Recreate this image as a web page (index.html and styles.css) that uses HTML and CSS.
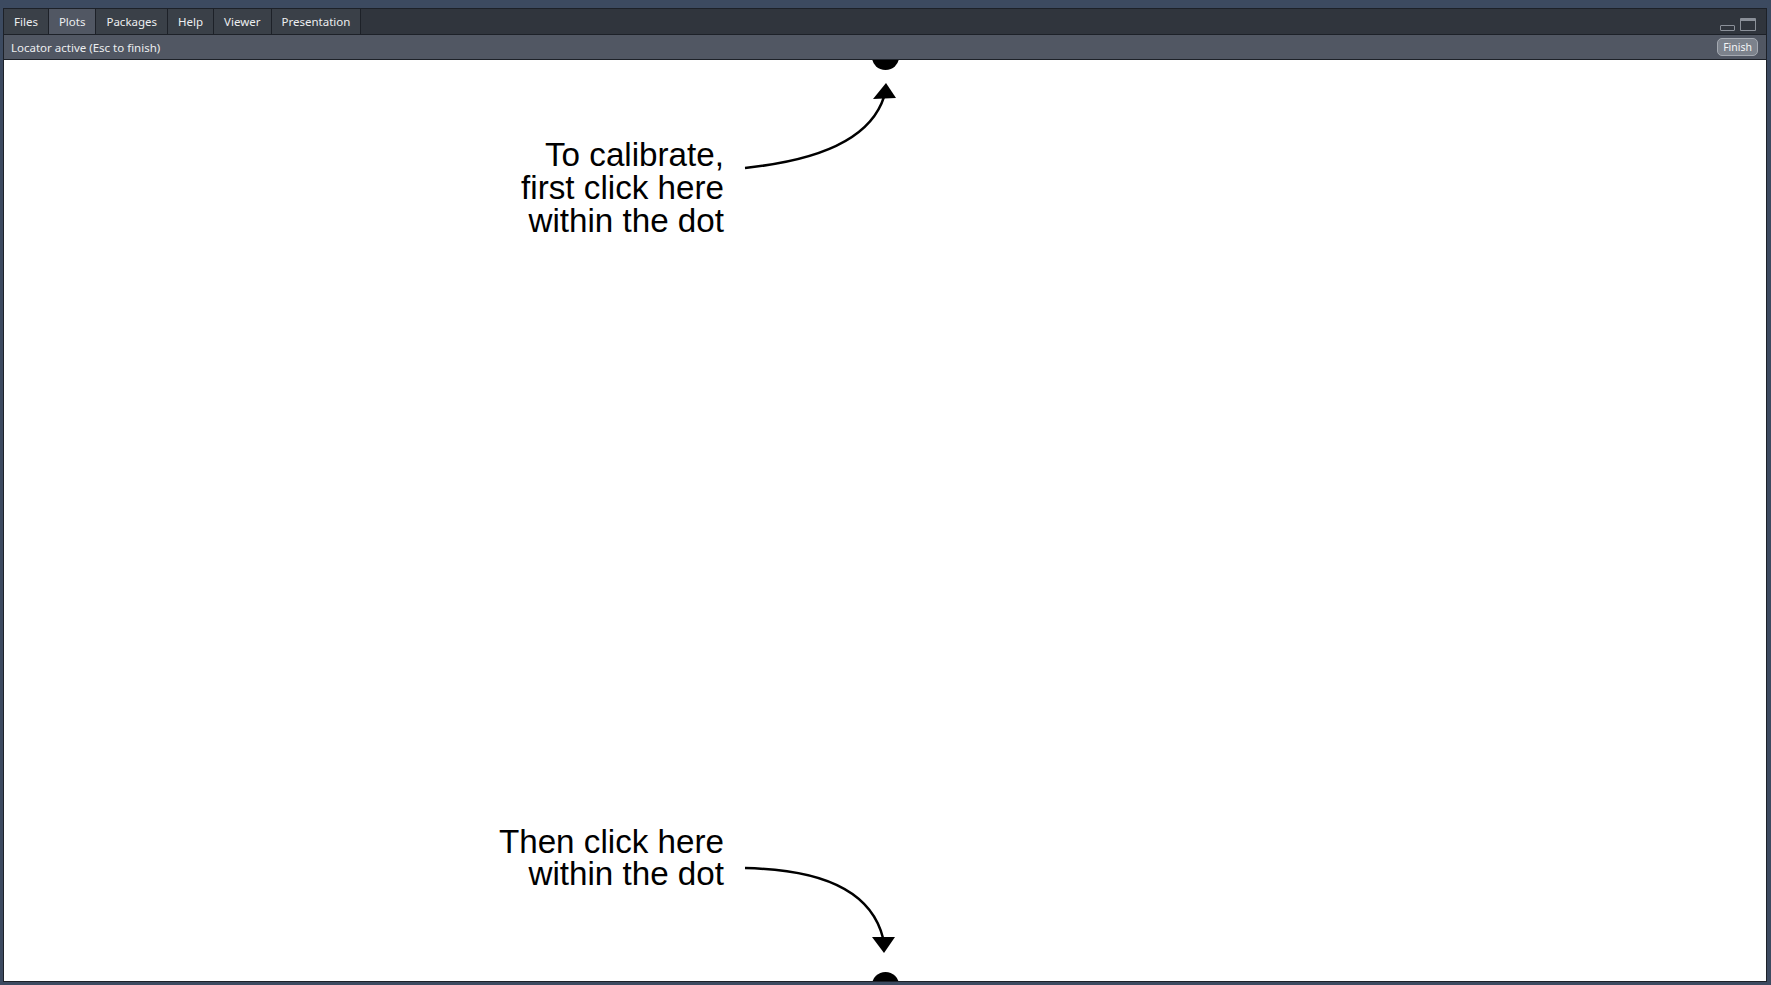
FILE: index.html
```html
<!DOCTYPE html>
<html>
<head>
<meta charset="utf-8">
<link rel="stylesheet" href="styles.css">
</head>
<body>
<div class="app">
  <div class="pane">
    <div class="tabbar">
      <div class="tabs">
        <div class="tab">Files</div>
        <div class="tab active">Plots</div>
        <div class="tab">Packages</div>
        <div class="tab">Help</div>
        <div class="tab">Viewer</div>
        <div class="tab">Presentation</div>
      </div>
      <div class="winbtns">
        <span class="minimize"></span>
        <span class="maximize"></span>
      </div>
    </div>
    <div class="locbar">
      <span class="loctext">Locator active (Esc to finish)</span>
      <button class="finish">Finish</button>
    </div>
    <div class="plot">
      <svg class="plotsvg" viewBox="4 59 1762 922" preserveAspectRatio="none" xmlns="http://www.w3.org/2000/svg">
        <ellipse cx="885.5" cy="56" rx="13.5" ry="13" fill="#000"/>
        <path d="M745,167 Q865,155 884,96" fill="none" stroke="#000" stroke-width="2.5"/>
        <polygon points="886,82 873,98 896,97" fill="#000"/>
        <text class="lbl" x="724" y="165" text-anchor="end">To calibrate,</text>
        <text class="lbl" x="724" y="198" text-anchor="end">first click here</text>
        <text class="lbl" x="724" y="231" text-anchor="end">within the dot</text>

        <text class="lbl" x="724" y="853" text-anchor="end">Then click here</text>
        <text class="lbl" x="724" y="885" text-anchor="end">within the dot</text>
        <path d="M745,868 Q866,870 883,938" fill="none" stroke="#000" stroke-width="2.5"/>
        <polygon points="872,937 895,937 884,953" fill="#000"/>
        <ellipse cx="885.5" cy="985" rx="13.5" ry="13" fill="#000"/>
      </svg>
    </div>
  </div>
</div>
</body>
</html>
```

FILE: styles.css
```css
html, body {
  margin: 0;
  padding: 0;
  width: 1771px;
  height: 985px;
  overflow: hidden;
  background: #3c4a60;
}
.app {
  box-sizing: border-box;
  width: 1771px;
  height: 985px;
  padding: 8px 4px 3px 3px;
}
.pane {
  box-sizing: border-box;
  height: 100%;
  border: 1px solid #1d2128;
  display: flex;
  flex-direction: column;
  font-family: "Noto Sans", "Open Sans", sans-serif;
  font-size: 11.5px;
  color: #eceef0;
}
.tabbar {
  height: 25px;
  flex: none;
  display: flex;
  justify-content: space-between;
  background: #30353d;
  border-bottom: 1px solid #1d2128;
}
.tabs {
  display: flex;
}
.tab {
  padding: 0 10px;
  display: flex;
  align-items: center;
  background: #3a4048;
  border-right: 1px solid #1d2128;
}
.tab.active {
  background: #515763;
}
.winbtns {
  display: flex;
  align-items: flex-end;
  gap: 5px;
  padding: 0 10px 3px 0;
}
.minimize {
  box-sizing: border-box;
  width: 15px;
  height: 6px;
  border: 1.5px solid #8b9099;
  border-radius: 1px;
}
.maximize {
  box-sizing: border-box;
  width: 16px;
  height: 13px;
  border: 1.5px solid #8b9099;
  border-top-width: 3px;
  border-radius: 1px;
}
.locbar {
  height: 24px;
  flex: none;
  display: flex;
  align-items: center;
  justify-content: space-between;
  background: #515763;
  border-bottom: 1px solid #1d2128;
  padding: 0 8px 0 7px;
}
.loctext {
  padding-top: 1px;
}
.finish {
  height: 18px;
  padding: 0 5px;
  border: 1px solid #a4a9b1;
  border-radius: 5px;
  background: #7c828c;
  color: #f4f5f7;
  font-family: "Noto Sans", sans-serif;
  font-size: 10.5px;
  line-height: 16px;
}
.plot {
  flex: 1;
  position: relative;
  background: #ffffff;
  overflow: hidden;
}
.plotsvg {
  display: block;
  width: 100%;
  height: 100%;
}
.lbl {
  font-family: "Liberation Sans", Arial, sans-serif;
  font-size: 33.2px;
  fill: #000;
}
```
